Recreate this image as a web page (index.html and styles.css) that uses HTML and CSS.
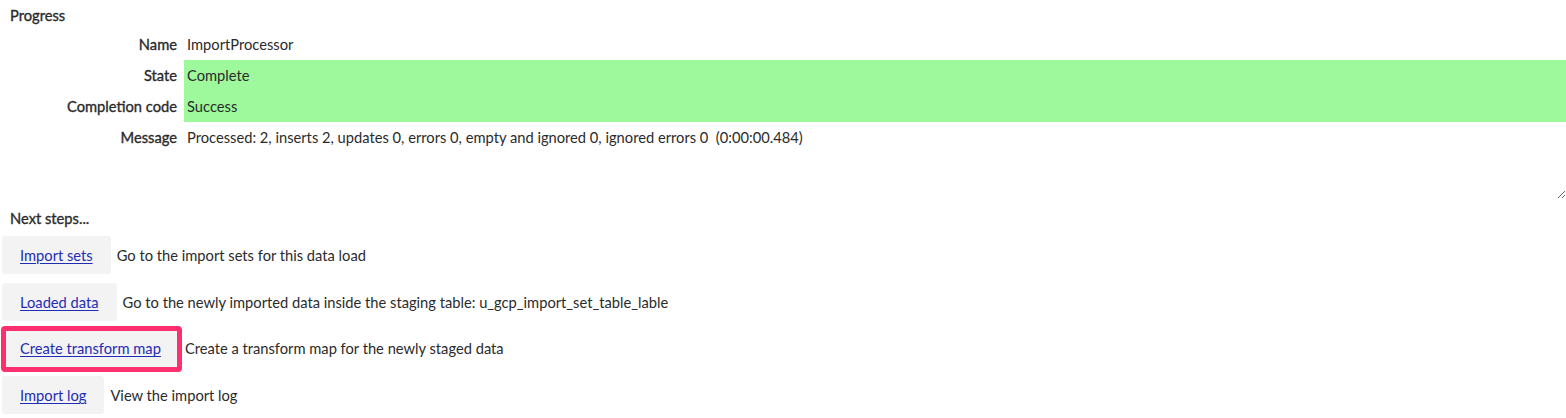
FILE: index.html
```html
<!DOCTYPE html>
<html lang="en">
<head>
<meta charset="utf-8">
<title>Progress</title>
<link rel="stylesheet" href="styles.css">
</head>
<body>
<div class="page">
  <section class="progress">
    <h2 class="section-title">Progress</h2>
    <div class="fields">
      <div class="field">
        <div class="label">Name</div>
        <div class="value">ImportProcessor</div>
      </div>
      <div class="field ok">
        <div class="label">State</div>
        <div class="value">Complete</div>
      </div>
      <div class="field ok">
        <div class="label">Completion code</div>
        <div class="value">Success</div>
      </div>
      <div class="field">
        <div class="label">Message</div>
        <div class="value message">Processed: 2, inserts 2, updates 0, errors 0, empty and ignored 0, ignored errors 0&nbsp; (0:00:00.484)</div>
      </div>
    </div>
  </section>
  <section class="next">
    <h2 class="section-title">Next steps...</h2>
    <ul class="steps">
      <li class="step"><span class="btn"><a href="#">Import sets</a></span><span class="desc">Go to the import sets for this data load</span></li>
      <li class="step"><span class="btn"><a href="#">Loaded data</a></span><span class="desc">Go to the newly imported data inside the staging table: u_gcp_import_set_table_lable</span></li>
      <li class="step"><span class="btn highlight"><a href="#">Create transform map</a></span><span class="desc">Create a transform map for the newly staged data</span></li>
      <li class="step"><span class="btn"><a href="#">Import log</a></span><span class="desc">View the import log</span></li>
    </ul>
  </section>
</div>
</body>
</html>
```
FILE: styles.css
```css
html, body {
  margin: 0;
  padding: 0;
  background: #ffffff;
}
body {
  font-family: Lato, "Open Sans", sans-serif;
  font-size: 14.7px;
  color: #2b2b2b;
}
.page {
  display: flex;
  flex-direction: column;
}
.section-title {
  margin: 0;
  font-size: 14.7px;
  font-weight: 400;
  -webkit-text-stroke: 0.35px currentColor;
  color: #2b2b2b;
  padding-left: 10px;
  height: 29px;
  line-height: 30px;
}
.fields {
  display: flex;
  flex-direction: column;
}
.field {
  display: grid;
  grid-template-columns: 177px 1fr;
  column-gap: 7px;
}
.label {
  text-align: right;
  font-weight: 400;
  -webkit-text-stroke: 0.35px currentColor;
  line-height: 31px;
  height: 31px;
  color: #2b2b2b;
}
.value {
  padding-left: 3px;
  line-height: 31px;
  height: 31px;
}
.field.ok .value {
  background: #9df99b;
}
.value.message {
  height: 77px;
  overflow: auto;
  resize: both;
  white-space: pre-wrap;
}
.next {
  padding-top: 4px;
}
.next .section-title {
  height: 33px;
  line-height: 30px;
}
.steps {
  list-style: none;
  margin: 0;
  padding: 0 0 0 2px;
  display: flex;
  flex-direction: column;
  gap: 8.7px;
}
.step {
  display: flex;
  align-items: center;
  gap: 6px;
}
.btn {
  display: flex;
  align-items: center;
  height: 38px;
  padding: 0 18px;
  background: #f3f3f4;
  border-radius: 3px;
  position: relative;
}
.btn a {
  color: #1f2cb4;
  text-decoration: underline;
  text-underline-offset: 2px;
}
.btn.highlight::after {
  content: "";
  position: absolute;
  top: -3px;
  left: -1px;
  right: -3px;
  bottom: -5px;
  border: 5px solid #fe2f6e;
  border-radius: 4px;
  pointer-events: none;
}
.desc {
  color: #2b2b2b;
}
```
